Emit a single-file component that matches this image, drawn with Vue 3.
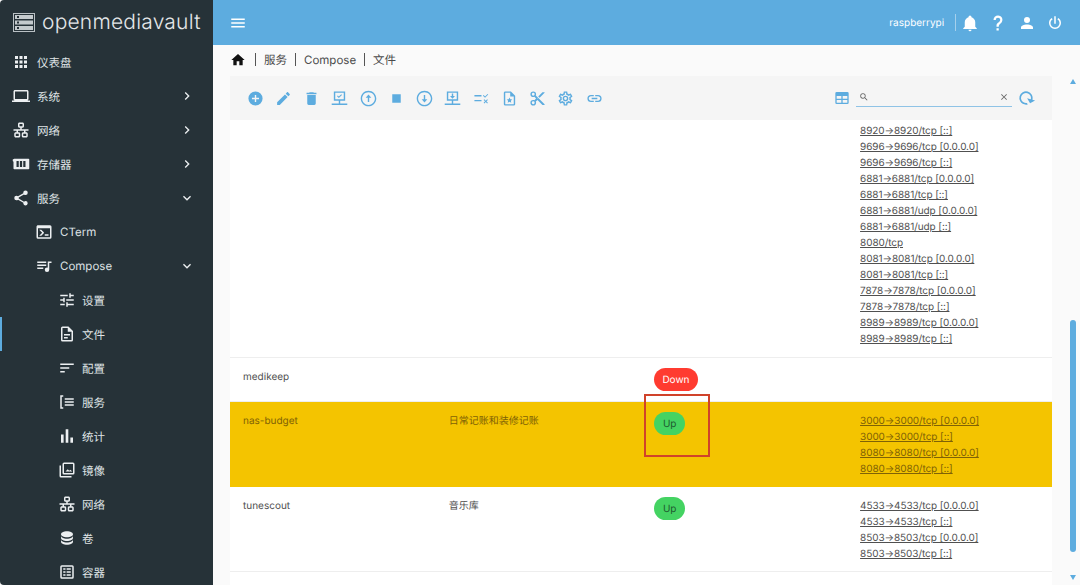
<template>
  <div class="app">
    <aside class="side">
      <div class="brand">
        <svg class="brand-icon" viewBox="0 0 22 19">
          <rect x="0.5" y="0.5" width="21" height="18" fill="none" stroke="#b9c0c4" />
          <rect x="2" y="2" width="18" height="4" fill="#c4cacd" />
          <rect x="2" y="7.5" width="18" height="4" fill="#c4cacd" />
          <rect x="2" y="13" width="18" height="4" fill="#c4cacd" />
          <path d="M4 3h2v2H4zM4 8.5h2v2H4zM4 14h2v2H4z" fill="#263238" />
        </svg>
        <span class="brand-text">openmediavault</span>
      </div>
      <nav>
        <div v-for="item in menu" :key="item.label + item.level" class="nav-item" :class="['lv' + item.level, { active: item.active }]">
          <svg class="nav-icon" viewBox="0 0 24 24"><path :d="paths[item.icon]" fill-rule="evenodd" /></svg>
          <span class="nav-label">{{ item.label }}</span>
          <svg v-if="item.arrow" class="nav-arrow" viewBox="0 0 24 24"><path :d="paths[item.arrow]" /></svg>
        </div>
      </nav>
    </aside>

    <div class="main">
      <header class="top">
        <svg class="menu-btn" viewBox="0 0 24 24"><path :d="paths.menu" /></svg>
        <span class="host">raspberrypi</span>
        <i class="top-sep"></i>
        <svg v-for="n in ['bell', 'help', 'account', 'power']" :key="n" class="top-icon" viewBox="0 0 24 24"><path :d="paths[n]" /></svg>
      </header>

      <div class="crumbs">
        <svg class="home" viewBox="0 0 24 24"><path :d="paths.home" /></svg>
        <template v-for="c in crumbs" :key="c">
          <i class="crumb-sep"></i>
          <span>{{ c }}</span>
        </template>
      </div>

      <div class="body">
        <section class="card">
          <div class="toolbar">
            <button v-for="t in tools" :key="t" class="tool">
              <svg viewBox="0 0 24 24"><path :d="paths[t]" fill-rule="evenodd" /></svg>
            </button>
            <svg class="table-btn" viewBox="0 0 24 24"><path :d="paths.grid" fill-rule="evenodd" /></svg>
            <div class="search">
              <svg viewBox="0 0 24 24"><path :d="paths.magnify" /></svg>
              <svg viewBox="0 0 24 24"><path :d="paths.close" /></svg>
            </div>
            <svg class="refresh" viewBox="0 0 24 24"><path :d="paths.refresh" /></svg>
          </div>

          <div v-for="row in rows" :key="row.name" class="row" :class="{ hl: row.hl, first: row.first }">
            <div>{{ row.name }}</div>
            <div>{{ row.desc }}</div>
            <div>
              <span v-if="row.state" class="chip" :class="row.state.toLowerCase()">{{ row.state }}</span>
              <span v-if="row.mark" class="mark"></span>
            </div>
            <div>
              <div v-for="p in row.ports" :key="p" class="port">{{ p }}</div>
            </div>
          </div>
        </section>

        <div class="rail">
          <i class="up"></i>
          <i class="thumb"></i>
          <i class="down"></i>
        </div>
      </div>
    </div>
  </div>
</template>

<script setup>
const paths = {
  apps: 'M16,20H20V16H16M16,14H20V10H16M10,8H14V4H10M16,8H20V4H16M10,14H14V10H10M4,14H8V10H4M4,20H8V16H4M10,20H14V16H10M4,8H8V4H4V8Z',
  laptop: 'M20,18C21.1,18 22,17.1 22,16V6C22,4.89 21.1,4 20,4H4C2.89,4 2,4.89 2,6V16A2,2 0 0,0 4,18H0V20H24V18H20M4,6H20V16H4V6Z',
  lan: 'M10,2C8.89,2 8,2.89 8,4V7C8,8.11 8.89,9 10,9H11V11H2V13H6V15H5C3.89,15 3,15.89 3,17V20C3,21.11 3.89,22 5,22H9C10.11,22 11,21.11 11,20V17C11,15.89 10.11,15 9,15H8V13H16V15H15C13.89,15 13,15.89 13,17V20C13,21.11 13.89,22 15,22H19C20.11,22 21,21.11 21,20V17C21,15.89 20.11,15 19,15H18V13H22V11H13V9H14C15.11,9 16,8.11 16,7V4C16,2.89 15.11,2 14,2H10M10,4H14V7H10V4M5,17H9V20H5V17M15,17H19V20H15V17Z',
  chip: 'M3 5H22a1 1 0 0 1 1 1V18a1 1 0 0 1-1 1H3a1 1 0 0 1-1-1V9L1 8V6z M6 8v8h3V8z M10.5 8v8h3V8z M15 8v8h3V8z',
  share: 'M18,16.08C17.24,16.08 16.56,16.38 16.04,16.85L8.91,12.7C8.96,12.47 9,12.24 9,12C9,11.76 8.96,11.53 8.91,11.3L15.96,7.19C16.5,7.69 17.21,8 18,8A3,3 0 0,0 21,5A3,3 0 0,0 18,2A3,3 0 0,0 15,5C15,5.24 15.04,5.47 15.09,5.7L8.04,9.81C7.5,9.31 6.79,9 6,9A3,3 0 0,0 3,12A3,3 0 0,0 6,15C6.79,15 7.5,14.69 8.04,14.19L15.16,18.34C15.11,18.55 15.08,18.77 15.08,19C15.08,20.61 16.39,21.91 18,21.91C19.61,21.91 20.92,20.61 20.92,19A2.92,2.92 0 0,0 18,16.08Z',
  console: 'M20,19V7H4V19H20M20,3A2,2 0 0,1 22,5V19A2,2 0 0,1 20,21H4A2,2 0 0,1 2,19V5C2,3.89 2.9,3 4,3H20M13,17V15H18V17H13M9.58,13L5.57,9H8.4L11.7,12.3C12.09,12.69 12.09,13.33 11.7,13.72L8.42,17H5.59L9.58,13Z',
  music: 'M15,6H3V8H15V6M15,10H3V12H15V10M3,16H11V14H3V16M17,6V14.18C16.69,14.07 16.35,14 16,14A3,3 0 0,0 13,17A3,3 0 0,0 16,20A3,3 0 0,0 19,17V8H22V6H17Z',
  tune: 'M3,17V19H9V17H3M3,5V7H13V5H3M13,21V19H21V17H13V15H11V21H13M7,9V11H3V13H7V15H9V9H7M21,13V11H11V13H21M15,9H17V7H21V5H17V3H15V9Z',
  file: 'M6,2A2,2 0 0,0 4,4V20A2,2 0 0,0 6,22H18A2,2 0 0,0 20,20V8L14,2H6M6,4H13V9H18V20H6V4M8,12V14H16V12H8M8,16V18H13V16H8Z',
  sort: 'M3,13H15V11H3M3,6V8H21V6M3,18H9V16H3V18Z',
  bracket: 'M3 3h4v2H5v14h2v2H3z M9 7h12v2H9z M9 11h12v2H9z M9 15h12v2H9z',
  bars: 'M4 10h3.500v11H4z M10.250 3h3.500v18h-3.500z M16.500 14H20v7h-3.500z',
  images: 'M22 4a2 2 0 0 0-2-2H8a2 2 0 0 0-2 2v12a2 2 0 0 0 2 2h12a2 2 0 0 0 2-2z M20 4v12H8V4z M2 6v14a2 2 0 0 0 2 2h14v-2H4V6z M10 14l3-3 2 2 1.5-1.5L19 14z',
  db: 'M12,3C7.58,3 4,4.79 4,7C4,9.21 7.58,11 12,11C16.42,11 20,9.21 20,7C20,4.79 16.42,3 12,3M4,9V12C4,14.21 7.58,16 12,16C16.42,16 20,14.21 20,12V9C20,11.21 16.42,13 12,13C7.58,13 4,11.21 4,9M4,14V17C4,19.21 7.58,21 12,21C16.42,21 20,19.21 20,17V14C20,16.21 16.42,18 12,18C7.58,18 4,16.21 4,14Z',
  boxlist: 'M3 5a2 2 0 0 1 2-2h14a2 2 0 0 1 2 2v14a2 2 0 0 1-2 2H5a2 2 0 0 1-2-2z M5 5v14h14V5z M7 7h3v2H7z M11.5 7H17v2h-5.5z M7 11h3v2H7z M11.5 11H17v2h-5.5z M7 15h3v2H7z M11.5 15H17v2h-5.5z',
  right: 'M8.59,16.58L13.17,12L8.59,7.41L10,6L16,12L10,18L8.59,16.58Z',
  down: 'M7.41,8.58L12,13.17L16.59,8.58L18,10L12,16L6,10L7.41,8.58Z',
  menu: 'M3,6H21V8H3V6M3,11H21V13H3V11M3,16H21V18H3V16Z',
  home: 'M10,20V14H14V20H19V12H22L12,3L2,12H5V20H10Z',
  bell: 'M21,19V20H3V19L5,17V11C5,7.9 7.03,5.17 10,4.29C10,4.19 10,4.1 10,4A2,2 0 0,1 12,2A2,2 0 0,1 14,4C14,4.1 14,4.19 14,4.29C16.97,5.17 19,7.9 19,11V17L21,19M14,21A2,2 0 0,1 12,23A2,2 0 0,1 10,21',
  help: 'M10,19H13V22H10V19M12,2C17.35,2.22 19.68,7.62 16.5,11.67C15.67,12.67 14.33,13.33 13.67,14.17C13,15 13,16 13,17H10C10,15.33 10,13.92 10.67,12.92C11.33,11.92 12.67,11.33 13.5,10.67C15.92,8.43 15.32,5.26 12,5A3,3 0 0,0 9,8H6A6,6 0 0,1 12,2Z',
  account: 'M12,4A4,4 0 0,1 16,8A4,4 0 0,1 12,12A4,4 0 0,1 8,8A4,4 0 0,1 12,4M12,14C16.42,14 20,15.79 20,18V20H4V18C4,15.79 7.58,14 12,14Z',
  power: 'M16.56,5.44L15.11,6.89C16.84,7.94 18,9.83 18,12A6,6 0 0,1 12,18A6,6 0 0,1 6,12C6,9.83 7.16,7.94 8.88,6.88L7.44,5.44C5.36,6.88 4,9.28 4,12A8,8 0 0,0 12,20A8,8 0 0,0 20,12C20,9.28 18.64,6.88 16.56,5.44M13,3H11V13H13',
  add: 'M12,2A10,10 0 0,0 2,12A10,10 0 0,0 12,22A10,10 0 0,0 22,12A10,10 0 0,0 12,2Z M17,13H13V17H11V13H7V11H11V7H13V11H17V13Z',
  pencil: 'M20.71,7.04C21.1,6.65 21.1,6 20.71,5.63L18.37,3.29C18,2.9 17.35,2.9 16.96,3.29L15.12,5.12L18.87,8.87M3,17.25V21H6.75L17.81,9.93L14.06,6.18L3,17.25Z',
  trash: 'M19,4H15.5L14.5,3H9.5L8.5,4H5V6H19M6,19A2,2 0 0,0 8,21H16A2,2 0 0,0 18,19V7H6V19Z',
  moncheck: 'M4 2H20V15H4V2z M6 4V13H18V4z M11 15h2v4h-2z M1 19H23V21H1z M8.500 8.700l1-1 1.600 1.600 3.400-3.400 1 1-4.400 4.400z',
  upc: 'M12,1C5.900,1 1,5.900 1,12C1,18.100 5.900,23 12,23C18.100,23 23,18.100 23,12C23,5.900 18.100,1 12,1z M12,3C17,3 21,7 21,12C21,17 17,21 12,21C7,21 3,17 3,12C3,7 7,3 12,3z M11,11V17H13V11H16L12,6.500L8,11H11Z',
  stop: 'M18,18H6V6H18V18Z',
  downc: 'M12,1C5.900,1 1,5.900 1,12C1,18.100 5.900,23 12,23C18.100,23 23,18.100 23,12C23,5.900 18.100,1 12,1z M12,3C17,3 21,7 21,12C21,17 17,21 12,21C7,21 3,17 3,12C3,7 7,3 12,3z M13,13V7H11V13H8L12,17.500L16,13H13Z',
  mondown: 'M4 2H20V15H4V2z M6 4V13H18V4z M11 15h2v4h-2z M1 19H23V21H1z M11 5h2v3.500h2.500L12 12.500 8.500 8.500H11z',
  checks: 'M2 7h10v2H2z M2 14h10v2H2z M14 8l1-1 2 2 3.500-3.500 1 1L17 11z M15 14l1-1 2 2 2-2 1 1-2 2 2 2-1 1-2-2-2 2-1-1 2-2z',
  filestar: 'M6,2A2,2 0 0,0 4,4V20A2,2 0 0,0 6,22H18A2,2 0 0,0 20,20V8L14,2H6z M6,4H13V9H18V20H6V4z M12 10.500l1.200 2.600 2.800.3-2.100 1.900.6 2.800-2.500-1.400-2.500 1.400.6-2.800-2.100-1.900 2.800-.3z',
  cut: 'M19,3L13,9L15,11L22,4V3M12,12.5A0.5,0.5 0 0,1 11.5,12A0.5,0.5 0 0,1 12,11.5A0.5,0.5 0 0,1 12.5,12A0.5,0.5 0 0,1 12,12.5M6,20A2,2 0 0,1 4,18C4,16.89 4.9,16 6,16A2,2 0 0,1 8,18C8,19.11 7.1,20 6,20M6,8A2,2 0 0,1 4,6C4,4.89 4.9,4 6,4A2,2 0 0,1 8,6C8,7.11 7.1,8 6,8M9.64,7.64C9.87,7.14 10,6.59 10,6A4,4 0 0,0 6,2A4,4 0 0,0 2,6A4,4 0 0,0 6,10C6.59,10 7.14,9.87 7.64,9.64L10,12L7.64,14.36C7.14,14.13 6.59,14 6,14A4,4 0 0,0 2,18A4,4 0 0,0 6,22A4,4 0 0,0 10,18C10,17.41 9.87,16.86 9.64,16.36L12,14L19,21H22V20L9.64,7.64Z',
  cog: 'M12,8A4,4 0 0,1 16,12A4,4 0 0,1 12,16A4,4 0 0,1 8,12A4,4 0 0,1 12,8M12,10A2,2 0 0,0 10,12A2,2 0 0,0 12,14A2,2 0 0,0 14,12A2,2 0 0,0 12,10M10,22C9.75,22 9.54,21.82 9.5,21.58L9.13,18.93C8.5,18.68 7.96,18.34 7.44,17.94L4.95,18.95C4.73,19.03 4.46,18.95 4.34,18.73L2.34,15.27C2.21,15.05 2.27,14.78 2.46,14.63L4.57,12.97L4.5,12L4.57,11L2.46,9.37C2.27,9.22 2.21,8.95 2.34,8.73L4.34,5.27C4.46,5.05 4.73,4.96 4.95,5.05L7.44,6.05C7.96,5.66 8.5,5.32 9.13,5.07L9.5,2.42C9.54,2.18 9.75,2 10,2H14C14.25,2 14.46,2.18 14.5,2.42L14.87,5.07C15.5,5.32 16.04,5.66 16.56,6.05L19.05,5.05C19.27,4.96 19.54,5.05 19.66,5.27L21.66,8.73C21.79,8.95 21.73,9.22 21.54,9.37L19.43,11L19.5,12L19.43,13L21.54,14.63C21.73,14.78 21.79,15.05 21.66,15.27L19.66,18.73C19.54,18.95 19.27,19.04 19.05,18.95L16.56,17.95C16.04,18.34 15.5,18.68 14.87,18.93L14.5,21.58C14.46,21.82 14.25,22 14,22H10M11.25,4L10.88,6.61C9.68,6.86 8.62,7.5 7.85,8.39L5.44,7.35L4.69,8.65L6.8,10.2C6.4,11.37 6.4,12.64 6.8,13.8L4.68,15.36L5.43,16.66L7.86,15.62C8.63,16.5 9.68,17.14 10.87,17.38L11.24,20H12.76L13.13,17.39C14.32,17.14 15.37,16.5 16.14,15.62L18.57,16.66L19.32,15.36L17.2,13.81C17.6,12.64 17.6,11.37 17.2,10.2L19.31,8.65L18.56,7.35L16.15,8.39C15.38,7.5 14.32,6.86 13.12,6.62L12.75,4H11.25Z',
  link: 'M3.9,12C3.9,10.29 5.29,8.9 7,8.9H11V7H7A5,5 0 0,0 2,12A5,5 0 0,0 7,17H11V15.1H7C5.29,15.1 3.9,13.71 3.9,12M8,13H16V11H8V13M17,7H13V8.9H17C18.71,8.9 20.1,10.29 20.1,12C20.1,13.71 18.71,15.1 17,15.1H13V17H17A5,5 0 0,0 22,12A5,5 0 0,0 17,7Z',
  grid: 'M4 3h16a2 2 0 0 1 2 2v14a2 2 0 0 1-2 2H4a2 2 0 0 1-2-2V5a2 2 0 0 1 2-2z M4 9v4h7V9z M13 9v4h7V9z M4 15v4h7v-4z M13 15v4h7v-4z',
  magnify: 'M9.5,3A6.5,6.5 0 0,1 16,9.5C16,11.11 15.41,12.59 14.44,13.73L14.71,14H15.5L20.5,19L19,20.5L14,15.5V14.71L13.73,14.44C12.59,15.41 11.11,16 9.5,16A6.5,6.5 0 0,1 3,9.5A6.5,6.5 0 0,1 9.5,3M9.5,5C7,5 5,7 5,9.5C5,12 7,14 9.5,14C12,14 14,12 14,9.5C14,7 12,5 9.5,5Z',
  close: 'M19,6.41L17.59,5L12,10.59L6.41,5L5,6.41L10.59,12L5,17.59L6.41,19L12,13.41L17.59,19L19,17.59L13.41,12L19,6.41Z',
  refresh: 'M17.65,6.35C16.2,4.9 14.21,4 12,4A8,8 0 0,0 4,12A8,8 0 0,0 12,20C15.73,20 18.84,17.45 19.73,14H17.65C16.83,16.33 14.61,18 12,18A6,6 0 0,1 6,12A6,6 0 0,1 12,6C13.66,6 15.14,6.69 16.22,7.78L13,11H20V4L17.65,6.35Z',
}

const menu = [
  { label: '仪表盘', icon: 'apps', level: 1 },
  { label: '系统', icon: 'laptop', level: 1, arrow: 'right' },
  { label: '网络', icon: 'lan', level: 1, arrow: 'right' },
  { label: '存储器', icon: 'chip', level: 1, arrow: 'right' },
  { label: '服务', icon: 'share', level: 1, arrow: 'down' },
  { label: 'CTerm', icon: 'console', level: 2 },
  { label: 'Compose', icon: 'music', level: 2, arrow: 'down' },
  { label: '设置', icon: 'tune', level: 3 },
  { label: '文件', icon: 'file', level: 3, active: true },
  { label: '配置', icon: 'sort', level: 3 },
  { label: '服务', icon: 'bracket', level: 3 },
  { label: '统计', icon: 'bars', level: 3 },
  { label: '镜像', icon: 'images', level: 3 },
  { label: '网络', icon: 'lan', level: 3 },
  { label: '卷', icon: 'db', level: 3 },
  { label: '容器', icon: 'boxlist', level: 3 },
]

const crumbs = ['服务', 'Compose', '文件']
const tools = ['add', 'pencil', 'trash', 'moncheck', 'upc', 'stop', 'downc', 'mondown', 'checks', 'filestar', 'cut', 'cog', 'link']

const rows = [
  {
    name: '', desc: '', first: true,
    ports: [
      '8920→8920/tcp [::]', '9696→9696/tcp [0.0.0.0]', '9696→9696/tcp [::]',
      '6881→6881/tcp [0.0.0.0]', '6881→6881/tcp [::]', '6881→6881/udp [0.0.0.0]',
      '6881→6881/udp [::]', '8080/tcp', '8081→8081/tcp [0.0.0.0]', '8081→8081/tcp [::]',
      '7878→7878/tcp [0.0.0.0]', '7878→7878/tcp [::]', '8989→8989/tcp [0.0.0.0]', '8989→8989/tcp [::]',
    ],
  },
  { name: 'medikeep', desc: '', state: 'Down', ports: [] },
  {
    name: 'nas-budget', desc: '日常记账和装修记账', state: 'Up', hl: true, mark: true,
    ports: ['3000→3000/tcp [0.0.0.0]', '3000→3000/tcp [::]', '8080→8080/tcp [0.0.0.0]', '8080→8080/tcp [::]'],
  },
  {
    name: 'tunescout', desc: '音乐库', state: 'Up',
    ports: ['4533→4533/tcp [0.0.0.0]', '4533→4533/tcp [::]', '8503→8503/tcp [0.0.0.0]', '8503→8503/tcp [::]'],
  },
]
</script>

<style>
html, body {
  margin: 0;
  height: 585px;
  overflow: hidden;
  background: #fafafa;
}
</style>

<style scoped>
.app {
  display: flex;
  width: 1080px;
  height: 585px;
  overflow: hidden;
  font-family: Inter, "Noto Sans CJK SC", sans-serif;
  text-rendering: geometricPrecision;
}

.side {
  flex: 0 0 213px;
  height: 585px;
  background: #263238;
  color: #dfe3e5;
  border-radius: 4px 0 0 4px;
  overflow: hidden;
}
.brand {
  display: flex;
  align-items: center;
  height: 45px;
  padding-left: 13px;
  gap: 7px;
}
.brand-icon {
  width: 22px;
  height: 19px;
}
.brand-text {
  font-weight: 300;
  font-size: 21px;
  letter-spacing: 0.2px;
  color: #e4e7e9;
}
.nav-item {
  position: relative;
  display: flex;
  align-items: center;
  height: 34px;
  font-size: 11.5px;
}
.nav-icon {
  width: 18px;
  height: 18px;
  fill: #eceff1;
  flex: none;
}
.lv1 { padding-left: 12px; }
.lv2 { padding-left: 35px; }
.lv3 { padding-left: 58px; }
.nav-label {
  margin-left: 7px;
  flex: 1;
}
.lv1 .nav-label,
.lv3 .nav-label {
  padding-top: 2px;
}
.lv3 .nav-label {
  margin-left: 6px;
}
.nav-arrow {
  width: 16px;
  height: 16px;
  fill: #eceff1;
  margin-right: 18px;
}
.nav-item.active::before {
  content: "";
  position: absolute;
  left: 0;
  top: 0;
  width: 2px;
  height: 34px;
  background: #5dacdf;
}

.main {
  flex: 1;
  min-width: 0;
  display: flex;
  flex-direction: column;
}
.top {
  display: flex;
  align-items: center;
  height: 45px;
  background: #5dacdf;
  color: #fff;
  padding: 0 16px 0 16px;
}
.menu-btn {
  width: 18px;
  height: 18px;
  fill: #fff;
  margin-right: auto;
}
.host {
  font-size: 10px;
}
.top-sep {
  width: 1px;
  height: 17px;
  background: #a5d0ec;
  margin: 0 5px 0 11px;
}
.top-icon {
  width: 18px;
  height: 18px;
  fill: #fff;
  margin-left: 10.3px;
}
.top-sep + .top-icon {
  margin-left: 0;
}

.crumbs {
  display: flex;
  align-items: center;
  height: 29px;
  padding-bottom: 2px;
  padding-left: 17px;
  font-size: 11.5px;
  color: #4a4a4a;
}
.home {
  width: 16px;
  height: 16px;
  fill: #111;
  margin-right: 1px;
}
.crumb-sep {
  width: 1px;
  height: 13px;
  background: #555;
  margin: 0 8px;
}

.body {
  flex: 1;
  min-height: 0;
  display: flex;
  padding-left: 17px;
}
.card {
  width: 822px;
  background: #fff;
  flex: none;
  overflow: hidden;
}
.toolbar {
  display: flex;
  align-items: center;
  height: 44px;
  padding-left: 11px;
  background: #f5f5f5;
}
.tool {
  flex: none;
  display: flex;
  align-items: center;
  justify-content: center;
  width: 28.25px;
  height: 28px;
  padding: 0;
  border: 0;
  background: none;
}
.tool svg {
  width: 17px;
  height: 17px;
  fill: #5dacdf;
}
.table-btn {
  width: 16px;
  height: 16px;
  fill: #5dacdf;
  margin-left: auto;
}
.search {
  display: flex;
  align-items: center;
  justify-content: space-between;
  box-sizing: border-box;
  width: 156px;
  height: 17px;
  margin: 0 4px 0 6px;
  padding: 0 3px 2px 3px;
  border-bottom: 1px solid #8fc3e6;
}
.search svg {
  width: 10px;
  height: 10px;
  fill: #666;
}
.refresh {
  width: 20px;
  height: 20px;
  fill: #5dacdf;
  margin-right: 16px;
  transform: rotate(60deg);
}

.row {
  display: grid;
  grid-template-columns: 205.7px 205.7px 205.7px 1fr;
  box-sizing: border-box;
  padding: 11px 0 9px 13px;
  border-bottom: 1px solid #eee;
  font-size: 10px;
  line-height: 16px;
  color: #505050;
}
.row.first {
  padding-top: 3px;
  padding-bottom: 10px;
}
.row.hl {
  background: #f4c400;
  border-bottom-color: #f4c400;
  color: #7f6206;
}
.row > div {
  position: relative;
  min-width: 0;
}
.port {
  height: 16px;
  text-decoration: underline;
  white-space: nowrap;
  letter-spacing: -0.08px;
}
.chip {
  display: inline-block;
  height: 23px;
  line-height: 24px;
  margin: -1px 0 1px;
  border-radius: 12px;
  font-size: 10px;
  vertical-align: top;
}
.chip.down {
  padding: 0 8px;
  background: #ff3b30;
  color: #fff;
}
.chip.up {
  padding: 0 8.500px;
  background: #44d362;
  color: #1f5a30;
}
.mark {
  position: absolute;
  left: -10px;
  top: -19px;
  width: 62px;
  height: 59px;
  border: 2px solid #d0432a;
}

.rail {
  flex: none;
  position: relative;
  width: 14px;
  margin-left: 14px;
  display: flex;
  flex-direction: column;
  align-items: center;
}
.rail .up {
  margin-top: 3px;
  border: 3.5px solid transparent;
  border-top: 0;
  border-bottom: 5px solid #5dacdf;
}
.thumb {
  width: 6px;
  height: 232px;
  margin-top: 236px;
  border-radius: 3px;
  background: #5dacdf;
}
.rail .down {
  margin-top: 23px;
  border: 3.5px solid transparent;
  border-bottom: 0;
  border-top: 5px solid #5dacdf;
}
</style>
